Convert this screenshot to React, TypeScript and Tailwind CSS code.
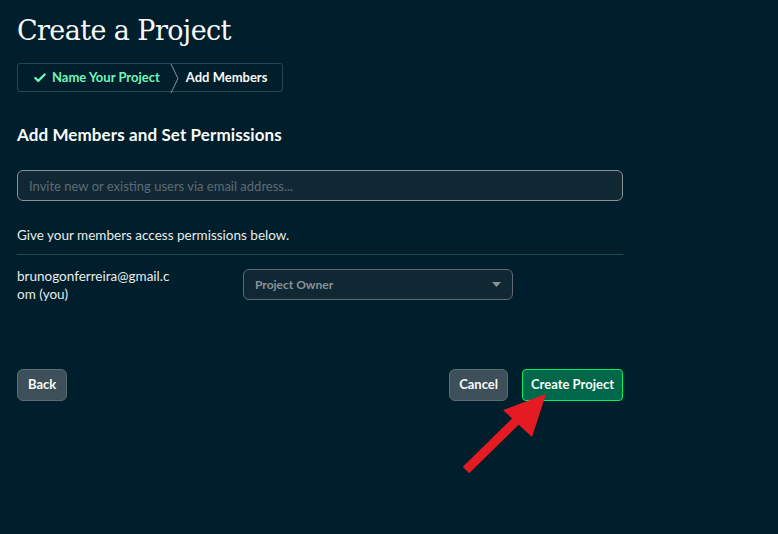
import { Check } from "lucide-react"

export default function App() {
    return (
        <main className="relative min-h-[534px] w-full bg-[#001e2b] text-white font-['Lato',sans-serif]">
            <div className="w-[623px] pl-[17px] pt-[12px]">
                {/* Title */}
                <h1 className="font-['DejaVu_Serif',serif] text-[27px] leading-[38px] text-[#f9fbfa] tracking-[-0.6px]">
                    Create a Project
                </h1>

                {/* Steps */}
                <div className="mt-[13px] inline-flex h-[29px] items-stretch rounded-[3px] border border-[#1c4b5e]">
                    <div className="flex items-center gap-[5px] pl-[15px] pr-[10px] text-[13px] font-bold text-[#71f6ba]">
                        <Check className="h-[14px] w-[14px] text-[#71f6ba]" strokeWidth={4} />
                        Name Your Project
                    </div>
                    <svg width="10" height="29" viewBox="0 0 10 29" className="shrink-0">
                        <path d="M1 0 L8 14.5 L1 29" fill="none" stroke="#889397" strokeWidth="1" />
                    </svg>
                    <div className="flex items-center pl-[6px] pr-[15px] text-[13px] font-bold text-[#f9fbfa]">
                        Add Members
                    </div>
                </div>

                {/* Section */}
                <h2 className="mt-[33px] text-[17px] font-bold leading-[20px] tracking-[0.1px] text-[#f9fbfa]">
                    Add Members and Set Permissions
                </h2>

                <input
                    className="mt-[25px] h-[31px] w-full rounded-[6px] border border-[#889397] bg-[#112733] px-[11px] text-[13px] text-white placeholder:text-[#5c6c75] outline-none"
                    placeholder="Invite new or existing users via email address..."
                />

                <p className="mt-[26px] text-[13.5px] leading-[16px] text-[#e8edeb]">
                    Give your members access permissions below.
                </p>
                <div className="mt-[11px] h-px w-full bg-[#1c4b5e]" />

                <div className="mt-[12px] flex items-start">
                    <div className="w-[226px] text-[13.5px] leading-[18px] text-[#e8edeb]">
                        brunogonferreira@gmail.c
                        <br />
                        om (you)
                    </div>
                    <div className="mt-[2px] flex h-[31px] w-[270px] items-center justify-between rounded-[6px] border border-[#5c6c75] bg-[#112733] px-[11px]">
                        <span className="text-[12px] font-bold text-[#889397]">Project Owner</span>
                        <svg width="9" height="5" viewBox="0 0 9 5">
                            <path d="M0 0 H9 L4.5 5 Z" fill="#889397" />
                        </svg>
                    </div>
                </div>

                {/* Actions */}
                <div className="mt-[66px] flex items-center justify-between">
                    <button className="h-[32px] rounded-[6px] border border-[#5c6c75] bg-[#3d4f58] px-[10px] text-[13px] font-bold text-[#f9fbfa]">
                        Back
                    </button>
                    <div className="flex items-center gap-[14px]">
                        <button className="h-[32px] rounded-[6px] border border-[#5c6c75] bg-[#3d4f58] px-[9px] text-[13px] font-bold text-[#f9fbfa]">
                            Cancel
                        </button>
                        <button className="h-[32px] rounded-[4px] border border-[#00ed64] bg-[#00684a] px-[8px] text-[13px] font-bold text-[#f9fbfa]">
                            Create Project
                        </button>
                    </div>
                </div>
            </div>

            {/* Annotation arrow */}
            <svg className="absolute left-[455px] top-[388px]" width="100" height="95" viewBox="0 0 100 95">
                <line x1="11" y1="82" x2="62" y2="32" stroke="#e51b23" strokeWidth="9" />
                <polygon points="91,6 48,22 77,49" fill="#e51b23" />
            </svg>
        </main>
    )
}
